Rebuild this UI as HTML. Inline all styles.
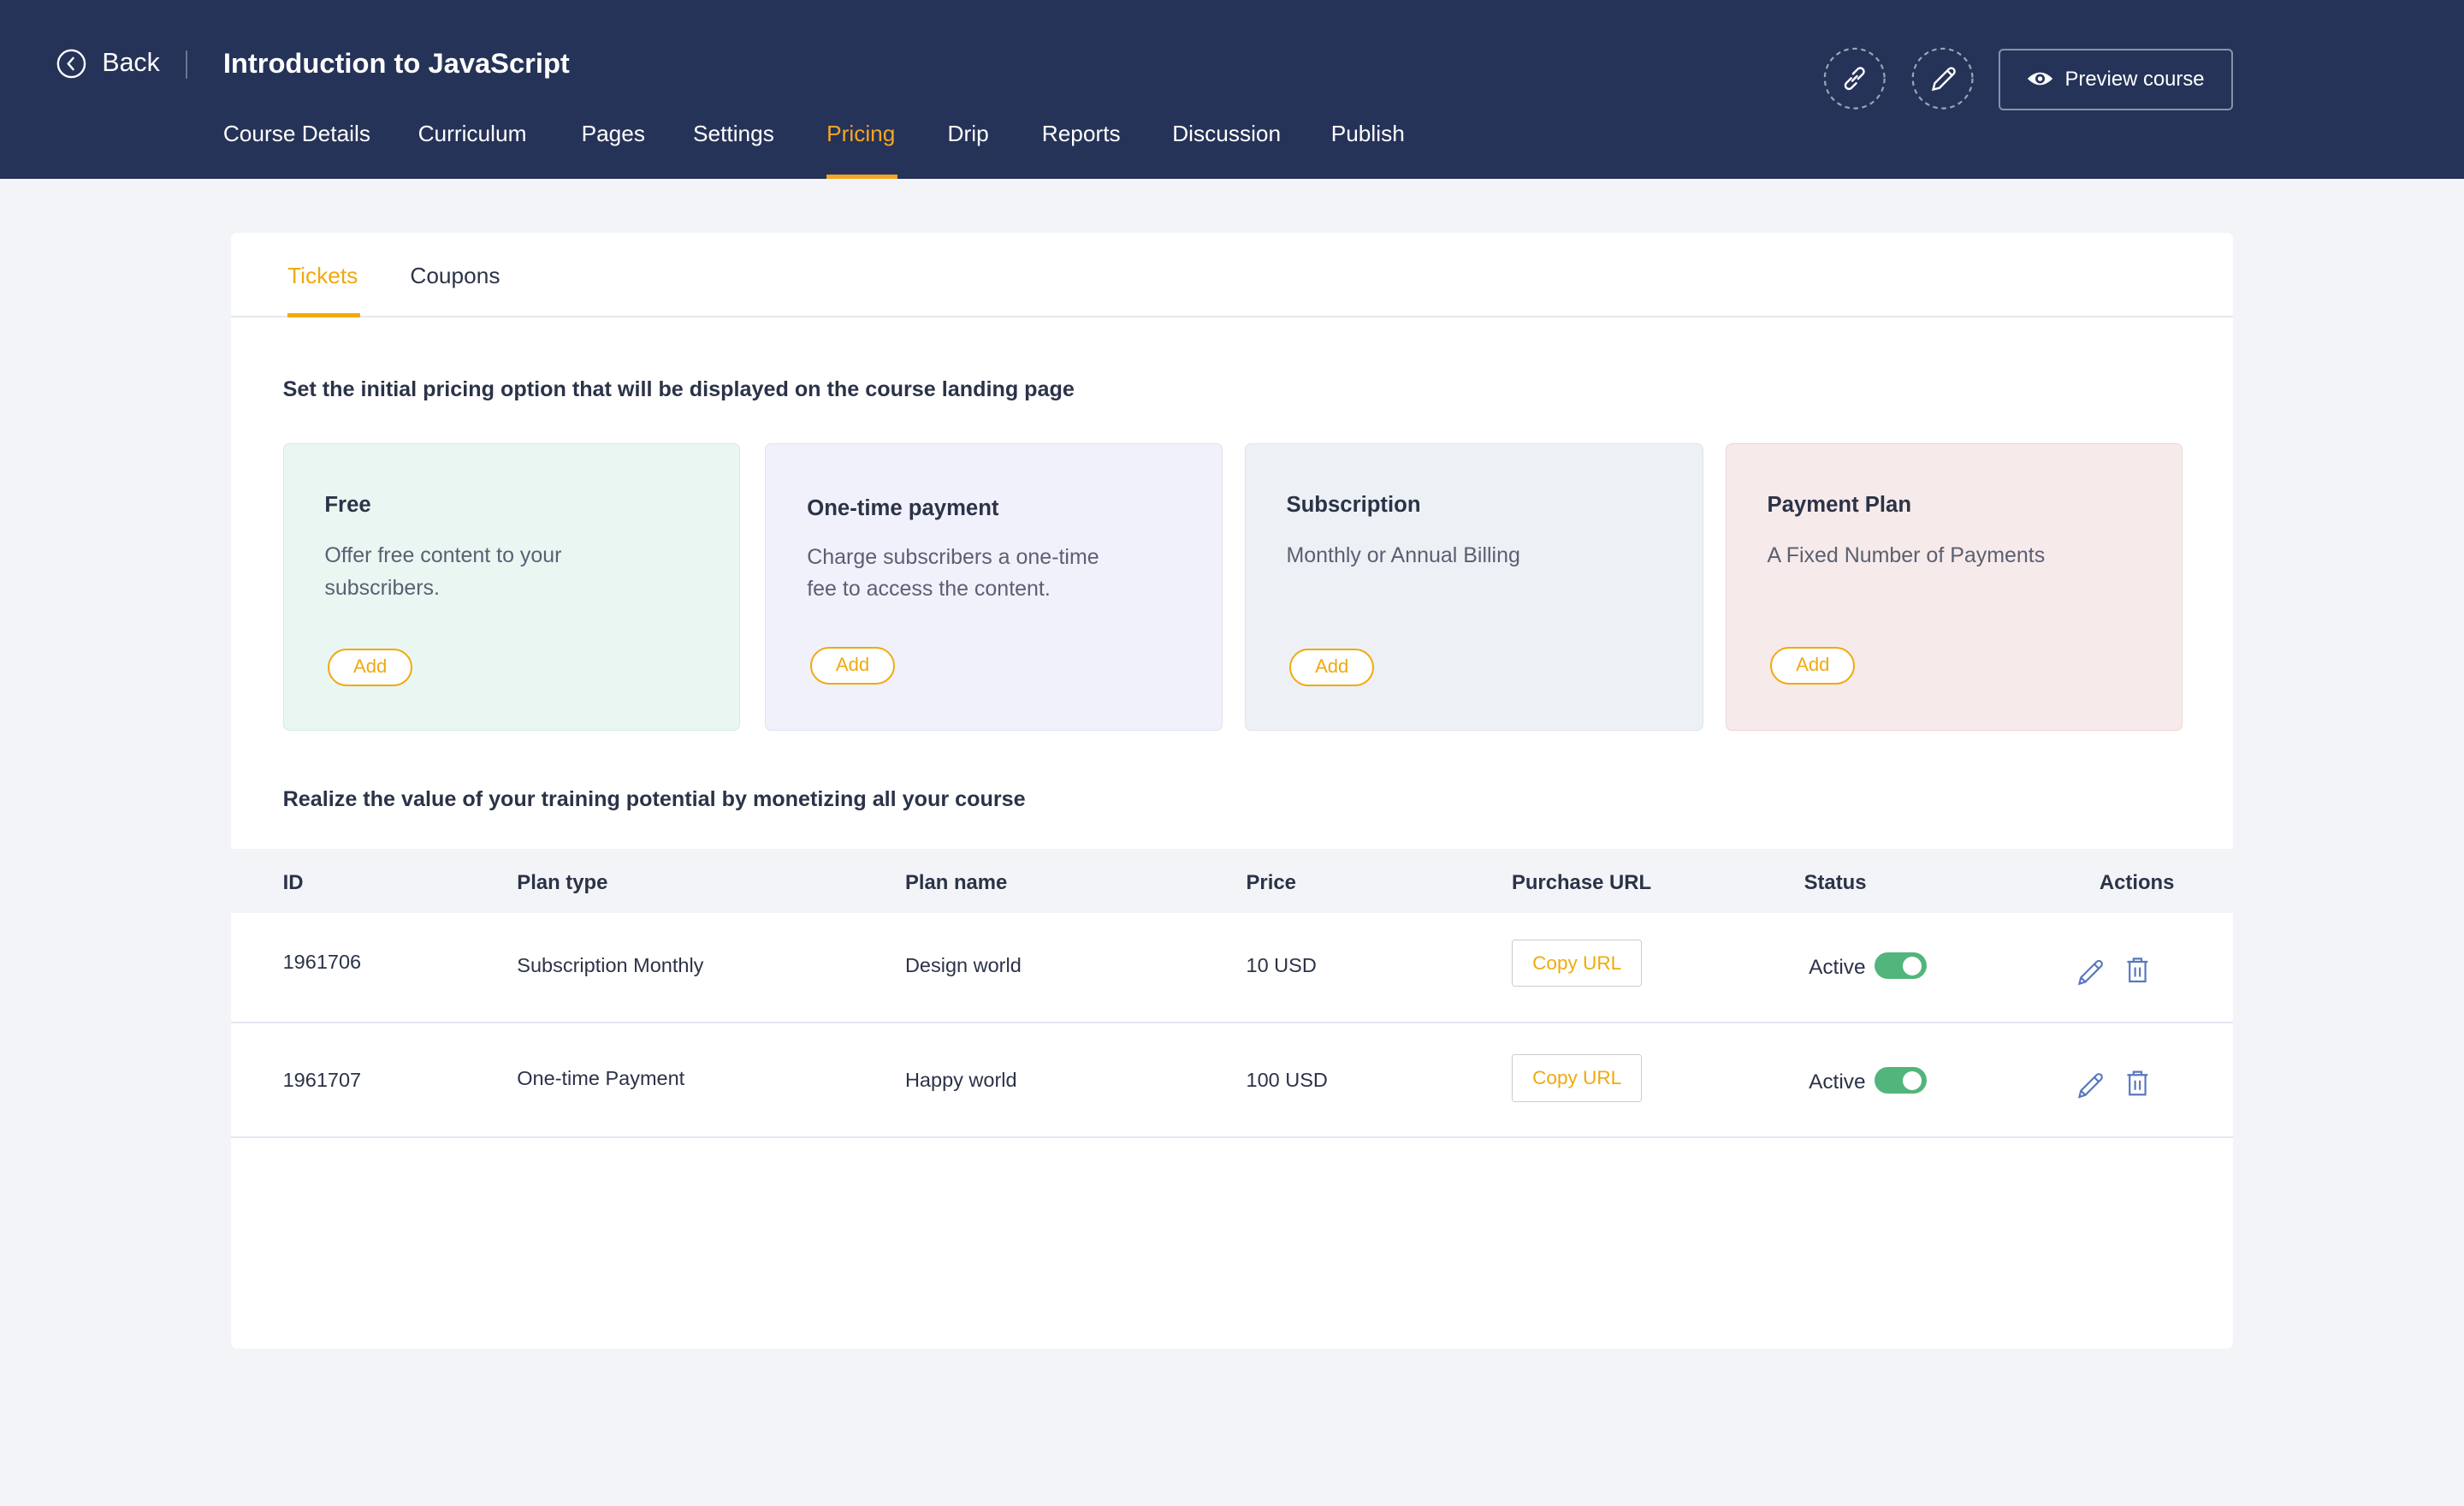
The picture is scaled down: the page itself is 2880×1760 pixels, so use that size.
<!DOCTYPE html>
<html><head><meta charset="utf-8"><style>
*{box-sizing:border-box;margin:0;padding:0}
html,body{width:2880px;height:1760px;overflow:hidden;background:#f3f4f7}
#root{zoom:1.836735;width:1568px;height:958px;position:relative;font-family:"Liberation Sans",sans-serif;color:#2b3348}
.abs{position:absolute;white-space:nowrap}
.hdr{position:absolute;left:0;top:0;width:1568px;height:114px;background:#263358}
.nav{font-size:14.3px;color:#fff;top:77px}
.card{position:absolute;left:147px;top:148px;width:1274px;height:710px;background:#fff;border-radius:4px}
.pc{position:absolute;top:282px;height:183px;border-radius:4px;border:1px solid}
.pc .t{position:absolute;left:26px;top:31px;font-size:14px;font-weight:bold;color:#2b3348}
.pc .d{position:absolute;left:26px;top:61px;font-size:13.6px;line-height:20.5px;color:#5a6072;white-space:normal;width:200px}
.pc .b{position:absolute;left:28px;top:130px;width:54px;height:24px;border:1.3px solid #f0a90e;border-radius:12px;color:#f0a90e;font-size:12px;text-align:center;line-height:21px;background:#fff}
.th{font-size:13px;font-weight:bold;top:554px;color:#2b3348}
.td{font-size:12.8px;color:#2b3348}
.cu{position:absolute;left:962px;width:83px;height:30px;border:1px solid #ccc;border-radius:2px;color:#f0a90e;font-size:12.3px;text-align:center;line-height:29px}
.tg{position:absolute;left:1193px;width:33px;height:17px;border-radius:9px;background:#52b57b}
.tg:after{content:"";position:absolute;right:3px;top:2.5px;width:12px;height:12px;border-radius:50%;background:#fff}
</style></head><body><div id="root">
<div class="hdr"></div>
<svg class="abs" style="left:36px;top:31px" width="19" height="19" viewBox="0 0 19 19"><circle cx="9.5" cy="9.5" r="8.5" fill="none" stroke="#fff" stroke-width="1.3"/><path d="M11 5.5 L7.5 9.5 L11 13.5" fill="none" stroke="#fff" stroke-width="1.3"/></svg>
<div class="abs" style="left:65px;top:31px;font-size:16.5px;color:#fff">Back</div>
<div class="abs" style="left:118px;top:32px;width:1px;height:18px;background:#6a7390"></div>
<div class="abs" style="left:142px;top:30px;font-size:17.8px;font-weight:bold;color:#fff">Introduction to JavaScript</div>
<div class="abs nav" style="left:142px">Course Details</div>
<div class="abs nav" style="left:266px">Curriculum</div>
<div class="abs nav" style="left:370px">Pages</div>
<div class="abs nav" style="left:441px">Settings</div>
<div class="abs nav" style="left:526px;color:#f5a623">Pricing</div>
<div class="abs" style="left:526px;top:111px;width:45px;height:3px;background:#f5a623"></div>
<div class="abs nav" style="left:603px">Drip</div>
<div class="abs nav" style="left:663px">Reports</div>
<div class="abs nav" style="left:746px">Discussion</div>
<div class="abs nav" style="left:847px">Publish</div>
<svg class="abs" style="left:1160px;top:30px" width="100" height="40" viewBox="0 0 100 40"><circle cx="20" cy="20" r="19" fill="none" stroke="#9aa3b8" stroke-width="1.2" stroke-dasharray="3 2.5"/><circle cx="76" cy="20" r="19" fill="none" stroke="#9aa3b8" stroke-width="1.2" stroke-dasharray="3 2.5"/>
<g fill="none" stroke="#fff" stroke-width="1.3" stroke-linecap="round"><path d="M19 17 l3-3 a2.2 2.2 0 0 1 3.2 3.2 l-3 3"/><path d="M21 23 l-3 3 a2.2 2.2 0 0 1 -3.2 -3.2 l3 -3"/><path d="M18.5 21.5 l3-3"/>
<path d="M70 27 l1-4 l9-9 a2 2 0 0 1 3 3 l-9 9 z M79 15 l3 3"/></g></svg>
<div class="abs" style="left:1272px;top:31px;width:149px;height:39px;border:1.3px solid #8891a8;border-radius:3px"></div>
<svg class="abs" style="left:1289px;top:44px" width="18" height="12" viewBox="0 0 18 12"><path d="M1 6 Q9 -2 17 6 Q9 14 1 6z" fill="#fff"/><circle cx="9" cy="6" r="3" fill="#263358"/><circle cx="9" cy="6" r="1.5" fill="#fff"/></svg>
<div class="abs" style="left:1314px;top:43px;font-size:13px;color:#fff">Preview course</div>

<div class="card"></div>
<div class="abs" style="left:183px;top:167px;font-size:14.3px;color:#f0a90e">Tickets</div>
<div class="abs" style="left:261px;top:167px;font-size:14.3px;color:#2b3348">Coupons</div>
<div class="abs" style="left:147px;top:201px;width:1274px;height:1px;background:#e6e8ee"></div>
<div class="abs" style="left:183px;top:199px;width:46px;height:3px;background:#f0a90e"></div>
<div class="abs" style="left:180px;top:240px;font-size:13.7px;font-weight:bold">Set the initial pricing option that will be displayed on the course landing page</div>

<div class="pc" style="left:180px;width:291px;background:#eaf6f2;border-color:#d3ebe2"><div class="t">Free</div><div class="d">Offer free content to your subscribers.</div><div class="b">Add</div></div>
<div class="pc" style="left:487px;width:291px;background:#f1f1fc;border-color:#e1e1f3"><div class="t" style="top:33px">One-time payment</div><div class="d" style="top:62px">Charge subscribers a one-time fee to access the content.</div><div class="b" style="top:129px">Add</div></div>
<div class="pc" style="left:792px;width:292px;background:#edf1f5;border-color:#dfe4ea"><div class="t">Subscription</div><div class="d">Monthly or Annual Billing</div><div class="b">Add</div></div>
<div class="pc" style="left:1098px;width:291px;background:#f7eaea;border-color:#ebd7d7"><div class="t">Payment Plan</div><div class="d" style="width:260px">A Fixed Number of Payments</div><div class="b" style="top:129px">Add</div></div>

<div class="abs" style="left:180px;top:501px;font-size:13.7px;font-weight:bold">Realize the value of your training potential by monetizing all your course</div>
<div class="abs" style="left:147px;top:540px;width:1274px;height:41px;background:#f3f4f7"></div>
<div class="abs th" style="left:180px">ID</div>
<div class="abs th" style="left:329px">Plan type</div>
<div class="abs th" style="left:576px">Plan name</div>
<div class="abs th" style="left:793px">Price</div>
<div class="abs th" style="left:962px">Purchase URL</div>
<div class="abs th" style="left:1148px">Status</div>
<div class="abs th" style="left:1336px">Actions</div>

<div class="abs td" style="left:180px;top:605px">1961706</div>
<div class="abs td" style="left:329px;top:607px">Subscription Monthly</div>
<div class="abs td" style="left:576px;top:607px">Design world</div>
<div class="abs td" style="left:793px;top:607px">10 USD</div>
<div class="cu" style="top:598px">Copy URL</div>
<div class="abs td" style="left:1151px;top:608px;font-size:13.3px">Active</div>
<div class="tg" style="top:606px"></div>
<div class="abs" style="left:147px;top:650px;width:1274px;height:1px;background:#e6e6f2"></div>

<div class="abs td" style="left:180px;top:680px">1961707</div>
<div class="abs td" style="left:329px;top:679px">One-time Payment</div>
<div class="abs td" style="left:576px;top:680px">Happy world</div>
<div class="abs td" style="left:793px;top:680px">100 USD</div>
<div class="cu" style="top:671px">Copy URL</div>
<div class="abs td" style="left:1151px;top:681px;font-size:13.3px">Active</div>
<div class="tg" style="top:679px"></div>
<div class="abs" style="left:147px;top:723px;width:1274px;height:1px;background:#e6e6f2"></div>

<svg class="abs" style="left:1320px;top:606px" width="60" height="100" viewBox="0 0 60 100"><g fill="none" stroke="#5a78bf" stroke-width="1.2">
<path d="M3.5 20 l1-4 l10-10 a1.8 1.8 0 0 1 2.8 2.8 l-10 10 z M13 7.5 l2.8 2.8 M4.5 16 l3 3"/>
<path d="M34 6 h13 M38 6 v-2 h5 v2 M35.5 6 v12.5 h10 v-12.5 M39 9.5 v6 M42 9.5 v6"/>
<g transform="translate(0,72)"><path d="M3.5 20 l1-4 l10-10 a1.8 1.8 0 0 1 2.8 2.8 l-10 10 z M13 7.5 l2.8 2.8 M4.5 16 l3 3"/>
<path d="M34 6 h13 M38 6 v-2 h5 v2 M35.5 6 v12.5 h10 v-12.5 M39 9.5 v6 M42 9.5 v6"/></g></g></svg>
</div></body></html>
